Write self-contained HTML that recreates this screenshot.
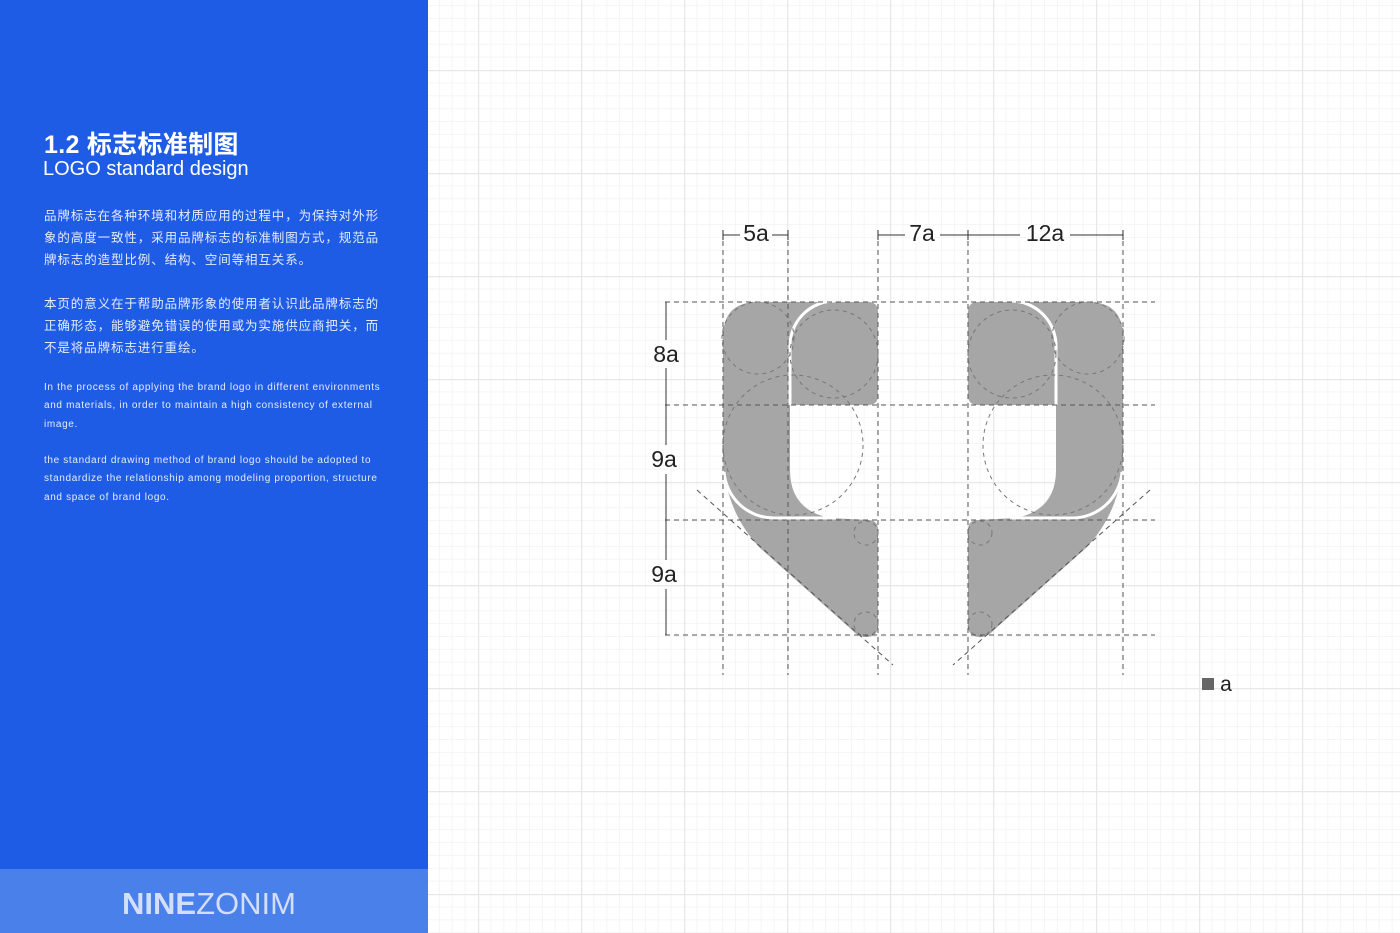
<!DOCTYPE html>
<html><head><meta charset="utf-8"><style>
*{margin:0;padding:0}
body{width:1400px;height:933px;position:relative;overflow:hidden;background:#fff;font-family:"Liberation Sans","Noto Sans CJK SC",sans-serif}
#side{position:absolute;left:0;top:0;width:428px;height:933px;background:#1f5ce5;color:#fff}
#foot{position:absolute;left:0;top:869px;width:428px;height:64px;background:#4a80ea}
#foot div{position:absolute;left:122px;top:17px;font-size:31px;color:#d3def8;letter-spacing:0px}
.t1{position:absolute;left:44px;top:125px;font-size:25px;font-weight:bold;white-space:nowrap;letter-spacing:0.3px}
.t2{position:absolute;left:43px;top:158px;font-size:20px;white-space:nowrap}
.p{position:absolute;left:44px;width:340px;font-size:12.5px;letter-spacing:0.9px;line-height:22px;color:#e4ebfb;font-family:"Noto Sans CJK SC",sans-serif}
.e{position:absolute;left:44px;width:340px;font-size:10px;line-height:18.3px;color:#e4ebfb;letter-spacing:0.65px;white-space:nowrap}
</style></head><body>
<svg style="position:absolute;left:0;top:0" width="1400" height="933">
<defs>
<pattern id="g" x="478" y="70" width="103" height="103" patternUnits="userSpaceOnUse">
<g stroke="#f5f5f5" stroke-width="1">
<path d="M12.9 0V103M25.75 0V103M38.6 0V103M51.5 0V103M64.4 0V103M77.25 0V103M90.1 0V103"/>
<path d="M0 12.9H103M0 25.75H103M0 38.6H103M0 51.5H103M0 64.4H103M0 77.25H103M0 90.1H103"/>
</g>
<path d="M0.5 0V103M0 0.5H103" stroke="#e8e8e8" stroke-width="1.5"/>
</pattern>
<g id="L">
<path fill="#a6a6a6" d="M723,337 Q723,302 758,302 L868,302 Q878,302 878,312 L878,395 Q878,405 868,405 L790,405 L790,470 Q790,510 830,518 L868,520 Q878,520 878,530 L878,625 Q878,637 866,637 Q858,637 852,630 L760,548 Q726,512 723,460 Z"/>
<path fill="none" stroke="#fff" stroke-width="3" d="M790,405 L790,348 A45 45 0 0 1 835,301"/>
<path fill="none" stroke="#fff" stroke-width="3" d="M724,472 A50 50 0 0 0 774,518 L836,518"/>
</g>
</defs>
<rect x="428" y="0" width="972" height="933" fill="url(#g)"/>
<use href="#L"/>
<use href="#L" transform="translate(1846,0) scale(-1,1)"/>
<g fill="none" stroke="#555" stroke-width="1" stroke-dasharray="5,4">
<path d="M723,232V675M788,232V675M878,232V675M968,232V675M1123,232V675"/>
<path d="M665,302H1155M665,405H1155M665,520H1155M665,635H1155"/>
<path d="M697,490L893,665M1150,490L953,665"/>
</g>
<g fill="none" stroke="#777" stroke-width="1" stroke-dasharray="4,4">
<circle cx="758" cy="338" r="36"/><circle cx="834" cy="354" r="44"/><circle cx="793" cy="445" r="70"/>
<circle cx="866" cy="533" r="12"/><circle cx="866" cy="624" r="12"/>
<circle cx="1088" cy="338" r="36"/><circle cx="1012" cy="354" r="44"/><circle cx="1053" cy="445" r="70"/>
<circle cx="980" cy="533" r="12"/><circle cx="980" cy="624" r="12"/>
</g>
<g stroke="#333" stroke-width="1">
<path d="M723,235H740M772,235H788M723,230V240M788,230V240"/>
<path d="M878,235H905M940,235H968M878,230V240M968,230V240M968,235H1020M1070,235H1123M1123,230V240"/>
<path d="M666,302V340M666,368V445M666,474V560M666,589V635"/>
</g>
<g font-family="Liberation Sans,sans-serif" font-size="23" fill="#222" text-anchor="middle">
<text x="756" y="241">5a</text><text x="922" y="241">7a</text><text x="1045" y="241">12a</text>
<text x="666" y="362">8a</text><text x="664" y="467">9a</text><text x="664" y="582">9a</text>
<text x="1226" y="691" font-size="21">a</text>
</g>
<rect x="1202" y="678" width="12" height="12" fill="#666"/>
</svg>
<div id="side">
<div class="t1">1.2 标志标准制图</div>
<div class="t2">LOGO standard design</div>
<div class="p" style="top:204px">品牌标志在各种环境和材质应用的过程中，为保持对外形<br>象的高度一致性，采用品牌标志的标准制图方式，规范品<br>牌标志的造型比例、结构、空间等相互关系。</div>
<div class="p" style="top:292px">本页的意义在于帮助品牌形象的使用者认识此品牌标志的<br>正确形态，能够避免错误的使用或为实施供应商把关，而<br>不是将品牌标志进行重绘。</div>
<div class="e" style="top:379px">In the process of applying the brand logo in different environments<br>and materials, in order to maintain a high consistency of external<br>image.</div>
<div class="e" style="top:452px">the standard drawing method of brand logo should be adopted to<br>standardize the relationship among modeling proportion, structure<br>and space of brand logo.</div>
<div id="foot"><div><b>NINE</b>ZONIM</div></div>
</div>
</body></html>
